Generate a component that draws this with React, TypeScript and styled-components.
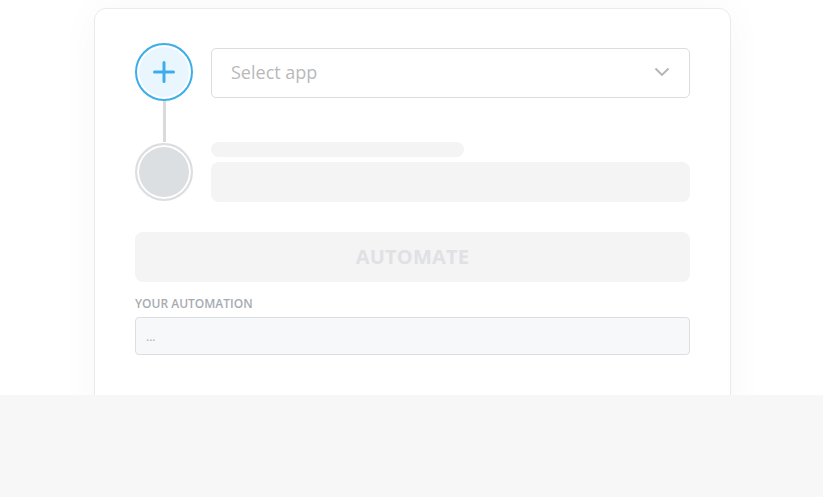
import React from 'react';
import styled, { createGlobalStyle } from 'styled-components';

const GlobalStyle = createGlobalStyle`
  html, body {
    margin: 0;
    padding: 0;
    background: #ffffff;
    font-family: 'Open Sans', 'Liberation Sans', sans-serif;
  }
`;

const Page = styled.div`
  width: 823px;
  height: 497px;
  display: flex;
  flex-direction: column;
`;

const Top = styled.div`
  height: 395px;
  overflow: hidden;
  display: flex;
  justify-content: center;
  padding: 8px 92px 0 94px;
  box-sizing: border-box;
  background: #ffffff;
`;

const Footer = styled.div`
  flex: 1;
  background: #f7f7f7;
`;

const Card = styled.div`
  width: 637px;
  height: 460px;
  box-sizing: border-box;
  border: 1px solid #e9eaec;
  border-radius: 12px;
  background: #ffffff;
  box-shadow: 0 0 40px rgba(20, 40, 60, 0.035);
  padding: 34px 40px 0 40px;
  display: flex;
  flex-direction: column;
`;

const StepRow = styled.div`
  display: flex;
  align-items: center;
  gap: 18px;
`;

const StepIcon = styled.div<{ $active?: boolean }>`
  width: 58px;
  height: 58px;
  flex: none;
  box-sizing: border-box;
  border-radius: 50%;
  border: 2px solid ${(p) => (p.$active ? '#3daeea' : '#dcdee0')};
  background: ${(p) => (p.$active ? '#eaf6fe' : '#dcdfe2')};
  box-shadow: inset 0 0 0 2px #ffffff;
  display: flex;
  align-items: center;
  justify-content: center;
`;

const Connector = styled.div`
  width: 3px;
  height: 41px;
  margin-left: 28px;
  background: #d9dadc;
`;

const Select = styled.div`
  flex: 1;
  height: 50px;
  box-sizing: border-box;
  border: 1px solid #dcdddf;
  border-radius: 5px;
  display: flex;
  align-items: center;
  justify-content: space-between;
  padding: 0 19px 2px 19px;
  font-size: 18px;
  color: #b9b9b9;
  margin-top: 2px;
`;

const Skeleton = styled.div`
  flex: 1;
  display: flex;
  flex-direction: column;
  gap: 5px;
`;

const SkeletonBar = styled.div<{ $w?: string; $h: number }>`
  width: ${(p) => p.$w || '100%'};
  height: ${(p) => p.$h}px;
  border-radius: 8px;
  background: #f4f4f4;
`;

const AutomateButton = styled.div`
  margin-top: 30px;
  height: 50px;
  border-radius: 8px;
  background: #f4f4f4;
  display: flex;
  align-items: center;
  justify-content: center;
  padding-bottom: 2px;
  box-sizing: border-box;
  font-size: 20px;
  font-weight: 700;
  letter-spacing: 0.2px;
  color: #dfe1e4;
`;

const Label = styled.div`
  margin-top: 14px;
  font-size: 12px;
  font-weight: 600;
  color: #a7abb1;
  line-height: 16px;
`;

const Output = styled.div`
  margin-top: 5px;
  height: 38px;
  box-sizing: border-box;
  border: 1px solid #dcdee2;
  border-radius: 4px;
  background: #f7f8fa;
  display: flex;
  align-items: center;
  padding: 0 10px;
  font-size: 12px;
  color: #a9adb3;
`;

export default function App() {
  return (
    <Page>
      <GlobalStyle />
      <Top>
        <Card>
          <StepRow>
            <StepIcon $active>
              <svg width="22" height="22" viewBox="0 0 22 22">
                <path
                  d="M11 1.5v19M1.5 11h19"
                  stroke="#3daeea"
                  strokeWidth="3"
                  strokeLinecap="round"
                />
              </svg>
            </StepIcon>
            <Select>
              <span>Select app</span>
              <svg width="16" height="10" viewBox="0 0 16 10">
                <path
                  d="M1.5 1.5L8 8l6.5-6.5"
                  fill="none"
                  stroke="#b4b4b4"
                  strokeWidth="1.8"
                />
              </svg>
            </Select>
          </StepRow>
          <Connector />
          <StepRow>
            <StepIcon />
            <Skeleton>
              <SkeletonBar $w="253px" $h={15} />
              <SkeletonBar $h={40} />
            </Skeleton>
          </StepRow>
          <AutomateButton>AUTOMATE</AutomateButton>
          <Label>YOUR AUTOMATION</Label>
          <Output>...</Output>
        </Card>
      </Top>
      <Footer />
    </Page>
  );
}
